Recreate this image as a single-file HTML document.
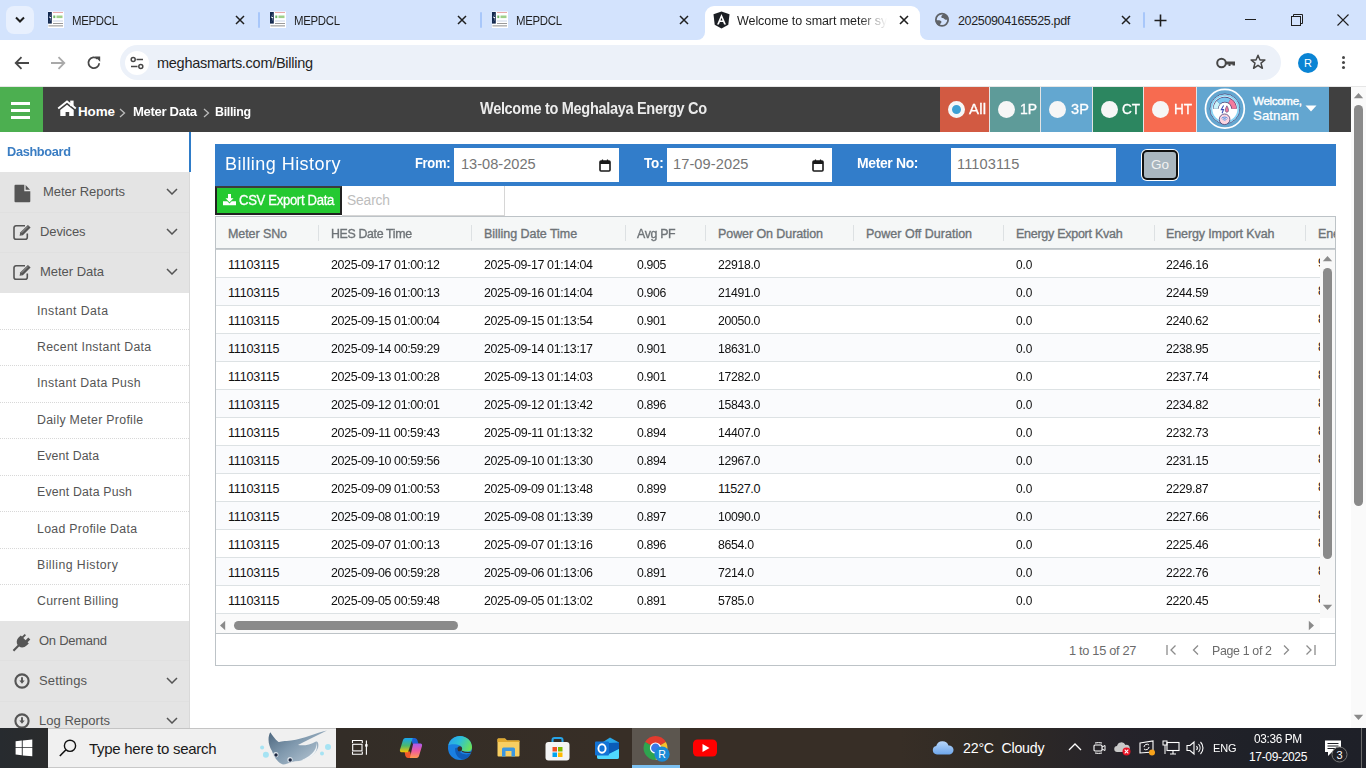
<!DOCTYPE html>
<html><head><meta charset="utf-8">
<style>
*{box-sizing:border-box;margin:0;padding:0}
html,body{width:1366px;height:768px;overflow:hidden;background:#fff;font-family:"Liberation Sans",sans-serif}
.a{position:absolute}
.nw{white-space:nowrap}
</style></head><body>

<div class="a" style="left:0;top:0;width:1366px;height:40px;background:#d3e3fd"></div>
<div class="a" style="left:6px;top:6px;width:28px;height:28px;border-radius:8px;background:#e8f0fe"></div>
<svg class="a" style="left:14px;top:15px" width="12" height="10" viewBox="0 0 12 10"><path d="M2 2.5 L6 6.5 L10 2.5" fill="none" stroke="#1f1f1f" stroke-width="2"/></svg>
<svg class="a" style="left:48px;top:11px" width="16" height="17" viewBox="0 0 16 17">
 <rect x="0" y="0.5" width="16" height="16.5" fill="#fff"/>
 <rect x="0" y="1" width="3.8" height="11.6" fill="#13294f"/>
 <path d="M2.6 2L1.3 7H2.5L1.6 11.5L3.2 6H2Z" fill="#fff"/>
 <rect x="5" y="1" width="10" height="1" fill="#eaa9a9"/>
 <rect x="5.3" y="4.5" width="2" height="2.6" fill="#74b86a"/>
 <rect x="8.5" y="4.5" width="6" height="2.6" fill="#9fd08a"/>
 <rect x="5" y="9.2" width="10" height="1.6" fill="#dfe5f1"/>
 <rect x="5" y="12" width="10" height="1" fill="#9a9a9a"/>
 <rect x="0.5" y="14" width="14.5" height="1.6" fill="#b8b8b8"/>
</svg>
<div class="a nw " style="left:72px;top:14px;font-size:12.5px;color:#1f1f1f;letter-spacing:-0.35px;transform:scaleX(0.914);transform-origin:0 0;">MEPDCL</div>
<svg class="a" style="left:235px;top:15px" width="10" height="10" viewBox="0 0 10 10"><path d="M1 1L9 9M9 1L1 9" stroke="#1f1f1f" stroke-width="1.5"/></svg>
<div class="a" style="left:258px;top:12px;width:2px;height:16px;background:#a8c7fa;border-radius:1px"></div>
<svg class="a" style="left:270px;top:11px" width="16" height="17" viewBox="0 0 16 17">
 <rect x="0" y="0.5" width="16" height="16.5" fill="#fff"/>
 <rect x="0" y="1" width="3.8" height="11.6" fill="#13294f"/>
 <path d="M2.6 2L1.3 7H2.5L1.6 11.5L3.2 6H2Z" fill="#fff"/>
 <rect x="5" y="1" width="10" height="1" fill="#eaa9a9"/>
 <rect x="5.3" y="4.5" width="2" height="2.6" fill="#74b86a"/>
 <rect x="8.5" y="4.5" width="6" height="2.6" fill="#9fd08a"/>
 <rect x="5" y="9.2" width="10" height="1.6" fill="#dfe5f1"/>
 <rect x="5" y="12" width="10" height="1" fill="#9a9a9a"/>
 <rect x="0.5" y="14" width="14.5" height="1.6" fill="#b8b8b8"/>
</svg>
<div class="a nw " style="left:294px;top:14px;font-size:12.5px;color:#1f1f1f;letter-spacing:-0.35px;transform:scaleX(0.914);transform-origin:0 0;">MEPDCL</div>
<svg class="a" style="left:457px;top:15px" width="10" height="10" viewBox="0 0 10 10"><path d="M1 1L9 9M9 1L1 9" stroke="#1f1f1f" stroke-width="1.5"/></svg>
<div class="a" style="left:480px;top:12px;width:2px;height:16px;background:#a8c7fa;border-radius:1px"></div>
<svg class="a" style="left:492px;top:11px" width="16" height="17" viewBox="0 0 16 17">
 <rect x="0" y="0.5" width="16" height="16.5" fill="#fff"/>
 <rect x="0" y="1" width="3.8" height="11.6" fill="#13294f"/>
 <path d="M2.6 2L1.3 7H2.5L1.6 11.5L3.2 6H2Z" fill="#fff"/>
 <rect x="5" y="1" width="10" height="1" fill="#eaa9a9"/>
 <rect x="5.3" y="4.5" width="2" height="2.6" fill="#74b86a"/>
 <rect x="8.5" y="4.5" width="6" height="2.6" fill="#9fd08a"/>
 <rect x="5" y="9.2" width="10" height="1.6" fill="#dfe5f1"/>
 <rect x="5" y="12" width="10" height="1" fill="#9a9a9a"/>
 <rect x="0.5" y="14" width="14.5" height="1.6" fill="#b8b8b8"/>
</svg>
<div class="a nw " style="left:516px;top:14px;font-size:12.5px;color:#1f1f1f;letter-spacing:-0.35px;transform:scaleX(0.914);transform-origin:0 0;">MEPDCL</div>
<svg class="a" style="left:679px;top:15px" width="10" height="10" viewBox="0 0 10 10"><path d="M1 1L9 9M9 1L1 9" stroke="#1f1f1f" stroke-width="1.5"/></svg>

<div class="a" style="left:705px;top:6px;width:215px;height:40px;background:#fff;border-radius:9px 9px 0 0"></div>
<div class="a" style="left:697px;top:30px;width:8px;height:10px;background:#fff"></div>
<div class="a" style="left:689px;top:22px;width:16px;height:18px;background:#d3e3fd;border-radius:0 0 8px 0"></div>
<div class="a" style="left:920px;top:30px;width:8px;height:10px;background:#fff"></div>
<div class="a" style="left:920px;top:22px;width:16px;height:18px;background:#d3e3fd;border-radius:0 0 0 8px"></div>
<svg class="a" style="left:713px;top:11px" width="17" height="18" viewBox="0 0 17 18"><path d="M8.5 0.5 L16.5 3.3 L15.3 13.8 L8.5 17.5 L1.7 13.8 L0.5 3.3Z" fill="#1c1f24"/><path d="M8.5 3 L4 13.5 H5.9 L6.9 11 H10.1 L11.1 13.5 H13 Z M7.5 9.4 L8.5 6.8 L9.5 9.4Z" fill="#fff"/></svg>
<div class="a nw " style="left:737px;top:14px;font-size:12.5px;color:#1f1f1f;letter-spacing:-0.07px;width:152px;overflow:hidden;-webkit-mask-image:linear-gradient(90deg,#000 122px,transparent 150px);">Welcome to smart meter system</div>
<svg class="a" style="left:899px;top:15px" width="10" height="10" viewBox="0 0 10 10"><path d="M1 1L9 9M9 1L1 9" stroke="#1f1f1f" stroke-width="1.6"/></svg>
<svg class="a" style="left:934px;top:12px" width="16" height="16" viewBox="0 0 16 16"><circle cx="8" cy="7.8" r="6.1" fill="none" stroke="#5f6368" stroke-width="1.8"/><path d="M7.3 5C7.3 3.5 8.5 2.6 10 2.3L13.5 3.8L14.5 6.5C13.5 7.8 12 8 11 7.5C10 7 9.8 6 8.8 6C8 6 7.3 5.8 7.3 5Z" fill="#5f6368"/><path d="M1.5 8.5C3 8.2 5 8 6.5 8.8C7.8 9.5 7.8 10.5 6.8 11.2C6 11.8 6 12.8 6.3 14L3.5 13L1.8 10.5Z" fill="#5f6368"/></svg>
<div class="a nw " style="left:958px;top:14px;font-size:12.5px;color:#1f1f1f;letter-spacing:-0.35px;">20250904165525.pdf</div>
<svg class="a" style="left:1121px;top:15px" width="10" height="10" viewBox="0 0 10 10"><path d="M1 1L9 9M9 1L1 9" stroke="#1f1f1f" stroke-width="1.5"/></svg>
<div class="a" style="left:1143px;top:12px;width:2px;height:16px;background:#a8c7fa;border-radius:1px"></div>
<svg class="a" style="left:1154px;top:14px" width="13" height="13" viewBox="0 0 13 13"><path d="M6.5 0.5V12.5M0.5 6.5H12.5" stroke="#1f1f1f" stroke-width="1.6"/></svg>
<div class="a" style="left:1245px;top:19px;width:11px;height:1px;background:#1f1f1f"></div>
<svg class="a" style="left:1291px;top:14px" width="12" height="12" viewBox="0 0 12 12"><rect x="0.5" y="2.5" width="9" height="9" fill="none" stroke="#1f1f1f"/><path d="M2.5 2.5V0.5H11.5V9.5H9.5" fill="none" stroke="#1f1f1f"/></svg>
<svg class="a" style="left:1337px;top:14px" width="12" height="12" viewBox="0 0 12 12"><path d="M0.5 0.5L11.5 11.5M11.5 0.5L0.5 11.5" stroke="#1f1f1f" stroke-width="1.1"/></svg>

<div class="a" style="left:0;top:40px;width:1366px;height:47px;background:#fff;border-radius:8px 8px 0 0"></div>
<svg class="a" style="left:14px;top:56px" width="16" height="14" viewBox="0 0 16 14"><path d="M15 7H2M7.5 1.2L1.7 7L7.5 12.8" fill="none" stroke="#474747" stroke-width="1.8"/></svg>
<svg class="a" style="left:50px;top:56px" width="16" height="14" viewBox="0 0 16 14"><path d="M1 7H14M8.5 1.2L14.3 7L8.5 12.8" fill="none" stroke="#a9a9a9" stroke-width="1.8"/></svg>
<svg class="a" style="left:86px;top:55px" width="16" height="16" viewBox="0 0 16 16"><path d="M13.2 8.2A5.4 5.4 0 1 1 11.6 3.9" fill="none" stroke="#474747" stroke-width="1.8"/><path d="M9 1.6H14.2V6.8Z" fill="#474747"/></svg>
<div class="a" style="left:120px;top:45px;width:1161px;height:35px;background:#ecf1f9;border-radius:18px"></div>
<div class="a" style="left:125px;top:51px;width:24px;height:24px;border-radius:50%;background:#fff"></div>
<svg class="a" style="left:130px;top:56px" width="14" height="14" viewBox="0 0 14 14"><circle cx="3.2" cy="3.5" r="2" fill="none" stroke="#474747" stroke-width="1.5"/><path d="M6.5 3.5H13" stroke="#474747" stroke-width="1.5"/><circle cx="10.8" cy="10.5" r="2" fill="none" stroke="#474747" stroke-width="1.5"/><path d="M1 10.5H7.5" stroke="#474747" stroke-width="1.5"/></svg>
<div class="a nw " style="left:157px;top:55px;font-size:14.5px;color:#1f1f1f;letter-spacing:-0.27px;">meghasmarts.com/Billing</div>
<svg class="a" style="left:1216px;top:56px" width="20" height="14" viewBox="0 0 20 14"><circle cx="5.5" cy="7" r="4.3" fill="none" stroke="#474747" stroke-width="2"/><path d="M9.5 5.5H19V9.5H16.5V8.5H14.5V10H12.5V8.5H9.5Z" fill="#474747"/></svg>
<svg class="a" style="left:1250px;top:54px" width="16" height="16" viewBox="0 0 16 16"><path d="M8 1.3L10 6H14.9L11 9.1L12.4 14.3L8 11.3L3.6 14.3L5 9.1L1.1 6H6Z" fill="none" stroke="#474747" stroke-width="1.5" stroke-linejoin="round"/></svg>
<div class="a" style="left:1298px;top:53px;width:20px;height:20px;border-radius:50%;background:#0a84d4;color:#fff;font-size:11px;text-align:center;line-height:20px">R</div>
<div class="a" style="left:1342px;top:56px;width:3px;height:3px;border-radius:50%;background:#474747;box-shadow:0 5px 0 #474747,0 10px 0 #474747"></div>
<div class="a" style="left:0;top:86px;width:1366px;height:1px;background:#e6e6e6"></div>

<div class="a" style="left:0;top:87px;width:1351px;height:45px;background:#404040"></div>
<div class="a" style="left:0;top:87px;width:43px;height:45px;background:#4caf50"></div>
<div class="a" style="left:11px;top:102px;width:19px;height:3px;background:#fff;box-shadow:0 7px 0 #fff,0 14px 0 #fff"></div>
<svg class="a" style="left:57px;top:100px" width="20" height="17" viewBox="0 0 20 17"><path d="M1.2 8.4L10 1.4L18.8 8.4" fill="none" stroke="#fff" stroke-width="1.9"/><rect x="13.2" y="0.6" width="3.4" height="5.5" fill="#fff"/><path d="M3.3 10L10 4.7L16.7 10V16H12.2V12H8.6V16H3.3Z" fill="#fff"/></svg>
<svg class="a" style="left:119px;top:107.5px" width="7" height="10" viewBox="0 0 7 10"><path d="M1 1L5.5 5L1 9" fill="none" stroke="#bbb" stroke-width="1.3"/></svg>
<svg class="a" style="left:203px;top:107.5px" width="7" height="10" viewBox="0 0 7 10"><path d="M1 1L5.5 5L1 9" fill="none" stroke="#bbb" stroke-width="1.3"/></svg>
<div class="a nw " style="left:78px;top:104px;font-size:13.4px;font-weight:bold;color:#fff;letter-spacing:-0.07px;">Home</div>
<div class="a nw " style="left:133px;top:104px;font-size:13.4px;font-weight:bold;color:#fff;letter-spacing:-0.35px;transform:scaleX(0.980);transform-origin:0 0;">Meter Data</div>
<div class="a nw " style="left:215px;top:104px;font-size:13.4px;font-weight:bold;color:#fff;letter-spacing:-0.35px;transform:scaleX(0.927);transform-origin:0 0;">Billing</div>
<div class="a nw " style="left:480px;top:100px;font-size:16px;font-weight:bold;color:#ececec;letter-spacing:-0.35px;transform:scaleX(0.908);transform-origin:0 0;">Welcome to Meghalaya Energy Co</div>
<div class="a" style="left:940px;top:87px;width:49px;height:45px;background:#d25a42"></div>
<div class="a" style="left:989px;top:87px;width:1px;height:45px;background:#e4e4e4"></div>
<div class="a" style="left:948px;top:101px;width:17px;height:17px;border-radius:50%;background:#3da0d4;border:4px solid #f6f6f6"></div>
<div class="a nw " style="left:969px;top:101px;font-size:14.3px;color:#fff;letter-spacing:0.20px;transform:scaleX(1.044);transform-origin:0 0;-webkit-text-stroke:0.3px #fff;">All</div>
<div class="a" style="left:990px;top:87px;width:50px;height:45px;background:#5e9b99"></div>
<div class="a" style="left:1040px;top:87px;width:1px;height:45px;background:#e4e4e4"></div>
<div class="a" style="left:998px;top:101px;width:17px;height:17px;border-radius:50%;background:#f6f6f6"></div>
<div class="a nw " style="left:1020px;top:101px;font-size:14.3px;color:#fff;letter-spacing:-0.10px;transform:scaleX(0.977);transform-origin:0 0;-webkit-text-stroke:0.3px #fff;">1P</div>
<div class="a" style="left:1041px;top:87px;width:51px;height:45px;background:#63a7d0"></div>
<div class="a" style="left:1092px;top:87px;width:1px;height:45px;background:#e4e4e4"></div>
<div class="a" style="left:1049px;top:101px;width:17px;height:17px;border-radius:50%;background:#f6f6f6"></div>
<div class="a nw " style="left:1071px;top:101px;font-size:14.3px;color:#fff;letter-spacing:0.20px;transform:scaleX(1.017);transform-origin:0 0;-webkit-text-stroke:0.3px #fff;">3P</div>
<div class="a" style="left:1093px;top:87px;width:50px;height:45px;background:#2c8660"></div>
<div class="a" style="left:1143px;top:87px;width:1px;height:45px;background:#e4e4e4"></div>
<div class="a" style="left:1101px;top:101px;width:17px;height:17px;border-radius:50%;background:#f6f6f6"></div>
<div class="a nw " style="left:1122px;top:101px;font-size:14.3px;color:#fff;letter-spacing:-0.10px;transform:scaleX(0.949);transform-origin:0 0;-webkit-text-stroke:0.3px #fff;">CT</div>
<div class="a" style="left:1144px;top:87px;width:52px;height:45px;background:#f76b50"></div>
<div class="a" style="left:1196px;top:87px;width:1px;height:45px;background:#e4e4e4"></div>
<div class="a" style="left:1152px;top:101px;width:17px;height:17px;border-radius:50%;background:#f6f6f6"></div>
<div class="a nw " style="left:1174px;top:101px;font-size:14.3px;color:#fff;letter-spacing:-0.10px;transform:scaleX(0.949);transform-origin:0 0;-webkit-text-stroke:0.3px #fff;">HT</div>
<div class="a" style="left:1197px;top:87px;width:132px;height:45px;background:#63a6d0"></div>
<svg class="a" style="left:1204px;top:88px" width="42" height="42" viewBox="0 0 42 42">
 <circle cx="20.9" cy="20.8" r="19.4" fill="none" stroke="#fff" stroke-width="1.7"/>
 <circle cx="20.9" cy="20.8" r="14.8" fill="#fff" stroke="#4b3f72" stroke-width="0.9"/>
 <circle cx="20.9" cy="20.8" r="13.5" fill="none" stroke="#86d3f4" stroke-width="1.8"/>
 <path d="M11.75 20.8 A9.15 9.15 0 0 1 30.05 20.8" fill="none" stroke="#4b3f72" stroke-width="5.6"/>
 <path d="M11.75 20.80 A9.15 9.15 0 0 1 14.43 14.33" fill="none" stroke="#c9f3fb" stroke-width="4.4"/>
 <path d="M14.43 14.33 A9.15 9.15 0 0 1 25.48 12.88" fill="none" stroke="#7cc7f0" stroke-width="4.4"/>
 <path d="M25.48 12.88 A9.15 9.15 0 0 1 30.05 20.80" fill="none" stroke="#f47a9d" stroke-width="4.4"/>
 <path d="M19.6 17.6L17.3 21.6H19.5L18.1 25.3" fill="none" stroke="#3a4fb8" stroke-width="1.1"/>
 <path d="M22.9 17.8C21.6 20 21 21.8 21.5 23.3C22 24.6 23.8 24.6 24.3 23.3C24.8 21.8 24.2 20 22.9 17.8Z" fill="#f47a9d" stroke="#4b3f72" stroke-width="0.6"/>
 <circle cx="20.6" cy="31.3" r="5.3" fill="#fbd5e1" stroke="#4b3f72" stroke-width="0.8"/>
 <path d="M17.6 30.3A4.2 4.2 0 0 1 23.6 30.3M18.7 31.5A2.6 2.6 0 0 1 22.5 31.5M19.8 32.6A1 1 0 0 1 21.4 32.6" fill="none" stroke="#3b8ee8" stroke-width="0.9"/>
</svg>
<svg class="a" style="left:1305px;top:105px" width="12" height="7" viewBox="0 0 12 7"><path d="M0.5 0.5H11.5L6 6.5Z" fill="#fff"/></svg>
<div class="a nw " style="left:1253px;top:94px;font-size:11.6px;color:#fff;letter-spacing:-0.33px;-webkit-text-stroke:0.4px #fff;">Welcome,</div>
<div class="a nw " style="left:1253px;top:108px;font-size:13.2px;color:#fff;letter-spacing:0.11px;-webkit-text-stroke:0.25px #fff;">Satnam</div>
<div class="a" style="left:1351px;top:87px;width:15px;height:641px;background:#fafafa"></div>
<svg class="a" style="left:1353px;top:92px" width="11" height="7" viewBox="0 0 11 7"><path d="M0.8 6.2H10.2L5.5 1Z" fill="#8a8a8a"/></svg>
<div class="a" style="left:1354px;top:105px;width:9px;height:401px;border-radius:5px;background:#8a8a8a"></div>
<svg class="a" style="left:1353px;top:714px" width="11" height="7" viewBox="0 0 11 7"><path d="M0.8 0.8H10.2L5.5 6Z" fill="#8a8a8a"/></svg>
<div class="a" style="left:0;top:132px;width:190px;height:596px;background:#fff;border-right:1px solid #d9d9d9"></div>
<div class="a" style="left:189px;top:132px;width:2px;height:40px;background:#2f7cc8"></div>
<div class="a" style="left:0;top:172px;width:189px;height:121px;background:#e4e4e4"></div>
<div class="a" style="left:0;top:212px;width:189px;height:1px;background:#e0e0e0"></div>
<div class="a" style="left:0;top:252px;width:189px;height:1px;background:#e0e0e0"></div>
<div class="a" style="left:0;top:621px;width:189px;height:107px;background:#e4e4e4"></div>
<div class="a" style="left:0;top:660px;width:189px;height:1px;background:#e0e0e0"></div>
<div class="a" style="left:0;top:701px;width:189px;height:1px;background:#e0e0e0"></div>
<div class="a nw " style="left:7px;top:144px;font-size:13.2px;font-weight:bold;color:#3a7dc3;letter-spacing:-0.35px;transform:scaleX(0.968);transform-origin:0 0;">Dashboard</div>
<svg class="a" style="left:14px;top:184px" width="17" height="19" viewBox="0 0 17 19"><path d="M1.5 0.7H10.3V7.2H16.3V17.3A1 1 0 0 1 15.3 18.3H1.5A1 1 0 0 1 0.5 17.3V1.7A1 1 0 0 1 1.5 0.7Z" fill="#555"/><path d="M11.6 1L16 5.8H11.6Z" fill="#555"/></svg>
<div class="a nw " style="left:43px;top:184px;font-size:13px;color:#555;letter-spacing:-0.03px;">Meter Reports</div>
<svg class="a" style="left:13px;top:224px" width="19" height="17" viewBox="0 0 19 17"><path d="M12 1.8H3A2 2 0 0 0 1 3.8V13.3A2 2 0 0 0 3 15.3H12.3A2 2 0 0 0 14.3 13.3V9.5" fill="none" stroke="#555" stroke-width="1.6"/><path d="M6.6 11.8L7.2 8.6L14.9 0.9L17.6 3.6L9.9 11.3Z" fill="#555"/><path d="M8.6 8.8L14.9 2.5M7.9 10.5L8.5 11" stroke="#bbb" stroke-width="0.7"/></svg>
<div class="a nw " style="left:40px;top:224px;font-size:13px;color:#555;letter-spacing:-0.12px;">Devices</div>
<svg class="a" style="left:13px;top:264px" width="19" height="17" viewBox="0 0 19 17"><path d="M12 1.8H3A2 2 0 0 0 1 3.8V13.3A2 2 0 0 0 3 15.3H12.3A2 2 0 0 0 14.3 13.3V9.5" fill="none" stroke="#555" stroke-width="1.6"/><path d="M6.6 11.8L7.2 8.6L14.9 0.9L17.6 3.6L9.9 11.3Z" fill="#555"/><path d="M8.6 8.8L14.9 2.5M7.9 10.5L8.5 11" stroke="#bbb" stroke-width="0.7"/></svg>
<div class="a nw " style="left:40px;top:264px;font-size:13px;color:#555;letter-spacing:-0.03px;">Meter Data</div>
<svg class="a" style="left:166px;top:188px" width="12" height="7" viewBox="0 0 12 7"><path d="M1 1L6 6L11 1" fill="none" stroke="#555" stroke-width="1.5"/></svg>
<svg class="a" style="left:166px;top:228px" width="12" height="7" viewBox="0 0 12 7"><path d="M1 1L6 6L11 1" fill="none" stroke="#555" stroke-width="1.5"/></svg>
<svg class="a" style="left:166px;top:268px" width="12" height="7" viewBox="0 0 12 7"><path d="M1 1L6 6L11 1" fill="none" stroke="#555" stroke-width="1.5"/></svg>
<svg class="a" style="left:166px;top:677px" width="12" height="7" viewBox="0 0 12 7"><path d="M1 1L6 6L11 1" fill="none" stroke="#555" stroke-width="1.5"/></svg>
<svg class="a" style="left:166px;top:717px" width="12" height="7" viewBox="0 0 12 7"><path d="M1 1L6 6L11 1" fill="none" stroke="#555" stroke-width="1.5"/></svg>
<div class="a nw " style="left:37px;top:304px;font-size:12.3px;color:#555;letter-spacing:0.43px;">Instant Data</div>
<div class="a nw " style="left:37px;top:340px;font-size:12.3px;color:#555;letter-spacing:0.30px;">Recent Instant Data</div>
<div class="a nw " style="left:37px;top:376px;font-size:12.3px;color:#555;letter-spacing:0.36px;">Instant Data Push</div>
<div class="a nw " style="left:37px;top:413px;font-size:12.3px;color:#555;letter-spacing:0.31px;">Daily Meter Profile</div>
<div class="a nw " style="left:37px;top:449px;font-size:12.3px;color:#555;letter-spacing:0.13px;">Event Data</div>
<div class="a nw " style="left:37px;top:485px;font-size:12.3px;color:#555;letter-spacing:0.19px;">Event Data Push</div>
<div class="a nw " style="left:37px;top:522px;font-size:12.3px;color:#555;letter-spacing:0.31px;">Load Profile Data</div>
<div class="a nw " style="left:37px;top:558px;font-size:12.3px;color:#555;letter-spacing:0.45px;">Billing History</div>
<div class="a nw " style="left:37px;top:594px;font-size:12.3px;color:#555;letter-spacing:0.30px;">Current Billing</div>
<div class="a" style="left:0;top:329px;width:189px;height:0;border-top:1px dotted #d8d8d8"></div>
<div class="a" style="left:0;top:365px;width:189px;height:0;border-top:1px dotted #d8d8d8"></div>
<div class="a" style="left:0;top:402px;width:189px;height:0;border-top:1px dotted #d8d8d8"></div>
<div class="a" style="left:0;top:438px;width:189px;height:0;border-top:1px dotted #d8d8d8"></div>
<div class="a" style="left:0;top:475px;width:189px;height:0;border-top:1px dotted #d8d8d8"></div>
<div class="a" style="left:0;top:511px;width:189px;height:0;border-top:1px dotted #d8d8d8"></div>
<div class="a" style="left:0;top:548px;width:189px;height:0;border-top:1px dotted #d8d8d8"></div>
<div class="a" style="left:0;top:584px;width:189px;height:0;border-top:1px dotted #d8d8d8"></div>
<svg class="a" style="left:12px;top:632px" width="20" height="20" viewBox="0 0 20 20"><path d="M12 1.2L14 3.2L11.3 5.9L13.6 8.2L16.3 5.5L18.3 7.5L15.6 10.2L16.8 11.4L14.6 13.6C12.4 15.8 9.2 16 7.1 14.6L2.2 19.5L0.7 18L5.6 13.1C4.2 11 4.4 7.8 6.6 5.6L8.8 3.4L10 4.6L12.7 1.9Z" fill="#555"/></svg>
<div class="a nw " style="left:39px;top:633px;font-size:13px;color:#555;letter-spacing:-0.26px;">On Demand</div>
<svg class="a" style="left:14px;top:673px" width="16" height="16" viewBox="0 0 16 16"><circle cx="8" cy="8" r="6.6" fill="none" stroke="#555" stroke-width="2.1"/><path d="M8 4.3V8.5" stroke="#555" stroke-width="1.9"/><path d="M5.3 7.6L8 10.8L10.7 7.6Z" fill="#555"/></svg>
<div class="a nw " style="left:39px;top:673px;font-size:13px;color:#555;letter-spacing:0.15px;">Settings</div>
<svg class="a" style="left:14px;top:713px" width="16" height="16" viewBox="0 0 16 16"><circle cx="8" cy="8" r="6.6" fill="none" stroke="#555" stroke-width="2.1"/><path d="M8 4.3V8.5" stroke="#555" stroke-width="1.9"/><path d="M5.3 7.6L8 10.8L10.7 7.6Z" fill="#555"/></svg>
<div class="a nw " style="left:39px;top:713px;font-size:13px;color:#555;letter-spacing:0.02px;">Log Reports</div>
<div class="a" style="left:215px;top:144px;width:1121px;height:42px;background:#327dca"></div>
<div class="a" style="left:454px;top:148px;width:165px;height:34px;background:#fff"></div>
<div class="a" style="left:667px;top:148px;width:165px;height:34px;background:#fff"></div>
<div class="a" style="left:951px;top:148px;width:165px;height:34px;background:#fff"></div>
<svg class="a" style="left:599px;top:159px" width="12" height="13" viewBox="0 0 12 13"><rect x="1" y="2" width="10" height="10" rx="1" fill="none" stroke="#1a1a1a" stroke-width="1.6"/><rect x="1" y="2" width="10" height="3" fill="#1a1a1a"/><path d="M3.5 0.5V2.5M8.5 0.5V2.5" stroke="#1a1a1a" stroke-width="1.2"/></svg>
<svg class="a" style="left:812px;top:159px" width="12" height="13" viewBox="0 0 12 13"><rect x="1" y="2" width="10" height="10" rx="1" fill="none" stroke="#1a1a1a" stroke-width="1.6"/><rect x="1" y="2" width="10" height="3" fill="#1a1a1a"/><path d="M3.5 0.5V2.5M8.5 0.5V2.5" stroke="#1a1a1a" stroke-width="1.2"/></svg>
<div class="a nw " style="left:224.5px;top:154px;font-size:17.6px;color:#fff;letter-spacing:0.45px;transform:scaleX(1.023);transform-origin:0 0;">Billing History</div>
<div class="a nw " style="left:415px;top:155px;font-size:14.5px;font-weight:bold;color:#fff;letter-spacing:-0.35px;transform:scaleX(0.894);transform-origin:0 0;">From:</div>
<div class="a nw " style="left:644px;top:155px;font-size:14.5px;font-weight:bold;color:#fff;letter-spacing:-0.10px;transform:scaleX(0.926);transform-origin:0 0;">To:</div>
<div class="a nw " style="left:857px;top:155px;font-size:14.5px;font-weight:bold;color:#fff;letter-spacing:-0.35px;transform:scaleX(0.960);transform-origin:0 0;">Meter No:</div>
<div class="a nw " style="left:461px;top:156px;font-size:14.6px;color:#757575;">13-08-2025</div>
<div class="a nw " style="left:673px;top:156px;font-size:14.6px;color:#757575;letter-spacing:0.09px;">17-09-2025</div>
<div class="a nw " style="left:957px;top:156px;font-size:14.6px;color:#757575;letter-spacing:0.10px;">11103115</div>
<div class="a" style="left:1141px;top:149px;width:38px;height:32px;border-radius:6px;background:#fff"></div>
<div class="a" style="left:1142px;top:150px;width:36px;height:30px;border-radius:5px;background:#a9b6bf;border:2px solid #111"></div>
<div class="a nw " style="left:1151px;top:156.5px;font-size:13.5px;color:#f2f2f2;letter-spacing:0px;">Go</div>
<div class="a" style="left:215px;top:186px;width:127px;height:29px;background:#24c931;border:2px solid #222;border-top-color:#3c3c3c"></div>
<svg class="a" style="left:222.5px;top:193.5px" width="13" height="12" viewBox="0 0 13 12"><path d="M5 0H8V4.3H10.5L6.5 8.3L2.5 4.3H5Z" fill="#fff"/><path d="M0 7.3H4.3L6.5 9.5L8.7 7.3H13V11.3H0Z" fill="#fff"/></svg>
<div class="a" style="left:342px;top:186px;width:163px;height:30px;background:#fff;border-right:1px solid #d6d6d6;border-bottom:1px solid #d6d6d6"></div>
<div class="a nw " style="left:239px;top:193px;font-size:13.8px;color:#fff;letter-spacing:-0.35px;transform:scaleX(0.951);transform-origin:0 0;-webkit-text-stroke:0.3px #fff;">CSV Export Data</div>
<div class="a nw " style="left:347px;top:193px;font-size:13.8px;color:#bdbdbd;letter-spacing:-0.14px;">Search</div>
<div class="a" style="left:215px;top:216px;width:1121px;height:450px;border:1px solid #bdc3c7;background:#fff"></div>
<div class="a" style="left:216px;top:217px;width:1119px;height:32px;background:#f5f7f7;border-bottom:1px solid #bdc3c7"></div>
<div class="a" style="left:216px;top:249px;width:1119px;height:1px;background:#c8cdd0"></div>
<div class="a" style="left:318px;top:225px;width:1px;height:16px;background:#dde1e3"></div>
<div class="a" style="left:471px;top:225px;width:1px;height:16px;background:#dde1e3"></div>
<div class="a" style="left:625px;top:225px;width:1px;height:16px;background:#dde1e3"></div>
<div class="a" style="left:705px;top:225px;width:1px;height:16px;background:#dde1e3"></div>
<div class="a" style="left:853px;top:225px;width:1px;height:16px;background:#dde1e3"></div>
<div class="a" style="left:1003px;top:225px;width:1px;height:16px;background:#dde1e3"></div>
<div class="a" style="left:1154px;top:225px;width:1px;height:16px;background:#dde1e3"></div>
<div class="a" style="left:1305px;top:225px;width:1px;height:16px;background:#dde1e3"></div>
<div class="a nw " style="left:228px;top:227px;font-size:12.5px;color:#6e7377;letter-spacing:-0.09px;-webkit-text-stroke:0.35px #6e7377;">Meter SNo</div>
<div class="a nw " style="left:331px;top:227px;font-size:12.5px;color:#6e7377;letter-spacing:-0.35px;transform:scaleX(0.989);transform-origin:0 0;-webkit-text-stroke:0.35px #6e7377;">HES Date Time</div>
<div class="a nw " style="left:484px;top:227px;font-size:12.5px;color:#6e7377;letter-spacing:-0.04px;-webkit-text-stroke:0.35px #6e7377;">Billing Date Time</div>
<div class="a nw " style="left:637px;top:227px;font-size:12.5px;color:#6e7377;letter-spacing:-0.35px;transform:scaleX(0.989);transform-origin:0 0;-webkit-text-stroke:0.35px #6e7377;">Avg PF</div>
<div class="a nw " style="left:718px;top:227px;font-size:12.5px;color:#6e7377;letter-spacing:-0.08px;-webkit-text-stroke:0.35px #6e7377;">Power On Duration</div>
<div class="a nw " style="left:866px;top:227px;font-size:12.5px;color:#6e7377;-webkit-text-stroke:0.35px #6e7377;">Power Off Duration</div>
<div class="a nw " style="left:1016px;top:227px;font-size:12.5px;color:#6e7377;letter-spacing:-0.27px;-webkit-text-stroke:0.35px #6e7377;">Energy Export Kvah</div>
<div class="a nw " style="left:1166px;top:227px;font-size:12.5px;color:#6e7377;letter-spacing:-0.12px;-webkit-text-stroke:0.35px #6e7377;">Energy Import Kvah</div>
<div class="a nw" style="left:1305px;top:217px;width:30px;height:32px;overflow:hidden"><div class="a nw " style="left:13px;top:10px;font-size:12.5px;color:#6e7377;letter-spacing:-0.2px;-webkit-text-stroke:0.35px #6e7377;">Energy</div>
</div>
<div class="a" style="left:216px;top:250px;width:1104px;height:28px;background:#fff;border-bottom:1px solid #dde2e4"></div>
<div class="a nw " style="left:228px;top:258px;font-size:12.6px;color:#111;letter-spacing:-0.23px;">11103115</div>
<div class="a nw " style="left:331px;top:258px;font-size:12.6px;color:#111;letter-spacing:-0.35px;transform:scaleX(0.985);transform-origin:0 0;">2025-09-17 01:00:12</div>
<div class="a nw " style="left:484px;top:258px;font-size:12.6px;color:#111;letter-spacing:-0.35px;transform:scaleX(0.985);transform-origin:0 0;">2025-09-17 01:14:04</div>
<div class="a nw " style="left:637px;top:258px;font-size:12.6px;color:#111;letter-spacing:-0.35px;transform:scaleX(0.973);transform-origin:0 0;">0.905</div>
<div class="a nw " style="left:718px;top:258px;font-size:12.6px;color:#111;letter-spacing:-0.35px;transform:scaleX(0.974);transform-origin:0 0;">22918.0</div>
<div class="a nw " style="left:1016px;top:258px;font-size:12.6px;color:#111;letter-spacing:-0.10px;transform:scaleX(0.941);transform-origin:0 0;">0.0</div>
<div class="a nw " style="left:1166px;top:258px;font-size:12.6px;color:#111;letter-spacing:-0.35px;transform:scaleX(0.979);transform-origin:0 0;">2246.16</div>
<div class="a" style="left:1318px;top:249px;width:2px;height:28px;overflow:hidden"><div class="a nw" style="left:0;top:7px;font-size:12.6px;color:#111">9</div></div>
<div class="a" style="left:216px;top:278px;width:1104px;height:28px;background:#fafbfd;border-bottom:1px solid #dde2e4"></div>
<div class="a nw " style="left:228px;top:286px;font-size:12.6px;color:#111;letter-spacing:-0.23px;">11103115</div>
<div class="a nw " style="left:331px;top:286px;font-size:12.6px;color:#111;letter-spacing:-0.35px;transform:scaleX(0.985);transform-origin:0 0;">2025-09-16 01:00:13</div>
<div class="a nw " style="left:484px;top:286px;font-size:12.6px;color:#111;letter-spacing:-0.35px;transform:scaleX(0.985);transform-origin:0 0;">2025-09-16 01:14:04</div>
<div class="a nw " style="left:637px;top:286px;font-size:12.6px;color:#111;letter-spacing:-0.35px;transform:scaleX(0.973);transform-origin:0 0;">0.906</div>
<div class="a nw " style="left:718px;top:286px;font-size:12.6px;color:#111;letter-spacing:-0.35px;transform:scaleX(0.974);transform-origin:0 0;">21491.0</div>
<div class="a nw " style="left:1016px;top:286px;font-size:12.6px;color:#111;letter-spacing:-0.10px;transform:scaleX(0.941);transform-origin:0 0;">0.0</div>
<div class="a nw " style="left:1166px;top:286px;font-size:12.6px;color:#111;letter-spacing:-0.35px;transform:scaleX(0.979);transform-origin:0 0;">2244.59</div>
<div class="a" style="left:1318px;top:277px;width:2px;height:28px;overflow:hidden"><div class="a nw" style="left:0;top:7px;font-size:12.6px;color:#111">8</div></div>
<div class="a" style="left:216px;top:306px;width:1104px;height:28px;background:#fff;border-bottom:1px solid #dde2e4"></div>
<div class="a nw " style="left:228px;top:314px;font-size:12.6px;color:#111;letter-spacing:-0.23px;">11103115</div>
<div class="a nw " style="left:331px;top:314px;font-size:12.6px;color:#111;letter-spacing:-0.35px;transform:scaleX(0.985);transform-origin:0 0;">2025-09-15 01:00:04</div>
<div class="a nw " style="left:484px;top:314px;font-size:12.6px;color:#111;letter-spacing:-0.35px;transform:scaleX(0.985);transform-origin:0 0;">2025-09-15 01:13:54</div>
<div class="a nw " style="left:637px;top:314px;font-size:12.6px;color:#111;letter-spacing:-0.35px;transform:scaleX(0.973);transform-origin:0 0;">0.901</div>
<div class="a nw " style="left:718px;top:314px;font-size:12.6px;color:#111;letter-spacing:-0.35px;transform:scaleX(0.974);transform-origin:0 0;">20050.0</div>
<div class="a nw " style="left:1016px;top:314px;font-size:12.6px;color:#111;letter-spacing:-0.10px;transform:scaleX(0.941);transform-origin:0 0;">0.0</div>
<div class="a nw " style="left:1166px;top:314px;font-size:12.6px;color:#111;letter-spacing:-0.35px;transform:scaleX(0.979);transform-origin:0 0;">2240.62</div>
<div class="a" style="left:1318px;top:305px;width:2px;height:28px;overflow:hidden"><div class="a nw" style="left:0;top:7px;font-size:12.6px;color:#111">8</div></div>
<div class="a" style="left:216px;top:334px;width:1104px;height:28px;background:#fafbfd;border-bottom:1px solid #dde2e4"></div>
<div class="a nw " style="left:228px;top:342px;font-size:12.6px;color:#111;letter-spacing:-0.23px;">11103115</div>
<div class="a nw " style="left:331px;top:342px;font-size:12.6px;color:#111;letter-spacing:-0.35px;transform:scaleX(0.985);transform-origin:0 0;">2025-09-14 00:59:29</div>
<div class="a nw " style="left:484px;top:342px;font-size:12.6px;color:#111;letter-spacing:-0.35px;transform:scaleX(0.985);transform-origin:0 0;">2025-09-14 01:13:17</div>
<div class="a nw " style="left:637px;top:342px;font-size:12.6px;color:#111;letter-spacing:-0.35px;transform:scaleX(0.973);transform-origin:0 0;">0.901</div>
<div class="a nw " style="left:718px;top:342px;font-size:12.6px;color:#111;letter-spacing:-0.35px;transform:scaleX(0.974);transform-origin:0 0;">18631.0</div>
<div class="a nw " style="left:1016px;top:342px;font-size:12.6px;color:#111;letter-spacing:-0.10px;transform:scaleX(0.941);transform-origin:0 0;">0.0</div>
<div class="a nw " style="left:1166px;top:342px;font-size:12.6px;color:#111;letter-spacing:-0.35px;transform:scaleX(0.979);transform-origin:0 0;">2238.95</div>
<div class="a" style="left:1318px;top:333px;width:2px;height:28px;overflow:hidden"><div class="a nw" style="left:0;top:7px;font-size:12.6px;color:#111">8</div></div>
<div class="a" style="left:216px;top:362px;width:1104px;height:28px;background:#fff;border-bottom:1px solid #dde2e4"></div>
<div class="a nw " style="left:228px;top:370px;font-size:12.6px;color:#111;letter-spacing:-0.23px;">11103115</div>
<div class="a nw " style="left:331px;top:370px;font-size:12.6px;color:#111;letter-spacing:-0.35px;transform:scaleX(0.985);transform-origin:0 0;">2025-09-13 01:00:28</div>
<div class="a nw " style="left:484px;top:370px;font-size:12.6px;color:#111;letter-spacing:-0.35px;transform:scaleX(0.985);transform-origin:0 0;">2025-09-13 01:14:03</div>
<div class="a nw " style="left:637px;top:370px;font-size:12.6px;color:#111;letter-spacing:-0.35px;transform:scaleX(0.973);transform-origin:0 0;">0.901</div>
<div class="a nw " style="left:718px;top:370px;font-size:12.6px;color:#111;letter-spacing:-0.35px;transform:scaleX(0.974);transform-origin:0 0;">17282.0</div>
<div class="a nw " style="left:1016px;top:370px;font-size:12.6px;color:#111;letter-spacing:-0.10px;transform:scaleX(0.941);transform-origin:0 0;">0.0</div>
<div class="a nw " style="left:1166px;top:370px;font-size:12.6px;color:#111;letter-spacing:-0.35px;transform:scaleX(0.979);transform-origin:0 0;">2237.74</div>
<div class="a" style="left:1318px;top:361px;width:2px;height:28px;overflow:hidden"><div class="a nw" style="left:0;top:7px;font-size:12.6px;color:#111">8</div></div>
<div class="a" style="left:216px;top:390px;width:1104px;height:28px;background:#fafbfd;border-bottom:1px solid #dde2e4"></div>
<div class="a nw " style="left:228px;top:398px;font-size:12.6px;color:#111;letter-spacing:-0.23px;">11103115</div>
<div class="a nw " style="left:331px;top:398px;font-size:12.6px;color:#111;letter-spacing:-0.35px;transform:scaleX(0.985);transform-origin:0 0;">2025-09-12 01:00:01</div>
<div class="a nw " style="left:484px;top:398px;font-size:12.6px;color:#111;letter-spacing:-0.35px;transform:scaleX(0.985);transform-origin:0 0;">2025-09-12 01:13:42</div>
<div class="a nw " style="left:637px;top:398px;font-size:12.6px;color:#111;letter-spacing:-0.35px;transform:scaleX(0.973);transform-origin:0 0;">0.896</div>
<div class="a nw " style="left:718px;top:398px;font-size:12.6px;color:#111;letter-spacing:-0.35px;transform:scaleX(0.974);transform-origin:0 0;">15843.0</div>
<div class="a nw " style="left:1016px;top:398px;font-size:12.6px;color:#111;letter-spacing:-0.10px;transform:scaleX(0.941);transform-origin:0 0;">0.0</div>
<div class="a nw " style="left:1166px;top:398px;font-size:12.6px;color:#111;letter-spacing:-0.35px;transform:scaleX(0.979);transform-origin:0 0;">2234.82</div>
<div class="a" style="left:1318px;top:389px;width:2px;height:28px;overflow:hidden"><div class="a nw" style="left:0;top:7px;font-size:12.6px;color:#111">8</div></div>
<div class="a" style="left:216px;top:418px;width:1104px;height:28px;background:#fff;border-bottom:1px solid #dde2e4"></div>
<div class="a nw " style="left:228px;top:426px;font-size:12.6px;color:#111;letter-spacing:-0.23px;">11103115</div>
<div class="a nw " style="left:331px;top:426px;font-size:12.6px;color:#111;letter-spacing:-0.35px;transform:scaleX(0.993);transform-origin:0 0;">2025-09-11 00:59:43</div>
<div class="a nw " style="left:484px;top:426px;font-size:12.6px;color:#111;letter-spacing:-0.35px;transform:scaleX(0.993);transform-origin:0 0;">2025-09-11 01:13:32</div>
<div class="a nw " style="left:637px;top:426px;font-size:12.6px;color:#111;letter-spacing:-0.35px;transform:scaleX(0.973);transform-origin:0 0;">0.894</div>
<div class="a nw " style="left:718px;top:426px;font-size:12.6px;color:#111;letter-spacing:-0.35px;transform:scaleX(0.974);transform-origin:0 0;">14407.0</div>
<div class="a nw " style="left:1016px;top:426px;font-size:12.6px;color:#111;letter-spacing:-0.10px;transform:scaleX(0.941);transform-origin:0 0;">0.0</div>
<div class="a nw " style="left:1166px;top:426px;font-size:12.6px;color:#111;letter-spacing:-0.35px;transform:scaleX(0.979);transform-origin:0 0;">2232.73</div>
<div class="a" style="left:1318px;top:417px;width:2px;height:28px;overflow:hidden"><div class="a nw" style="left:0;top:7px;font-size:12.6px;color:#111">8</div></div>
<div class="a" style="left:216px;top:446px;width:1104px;height:28px;background:#fafbfd;border-bottom:1px solid #dde2e4"></div>
<div class="a nw " style="left:228px;top:454px;font-size:12.6px;color:#111;letter-spacing:-0.23px;">11103115</div>
<div class="a nw " style="left:331px;top:454px;font-size:12.6px;color:#111;letter-spacing:-0.35px;transform:scaleX(0.985);transform-origin:0 0;">2025-09-10 00:59:56</div>
<div class="a nw " style="left:484px;top:454px;font-size:12.6px;color:#111;letter-spacing:-0.35px;transform:scaleX(0.985);transform-origin:0 0;">2025-09-10 01:13:30</div>
<div class="a nw " style="left:637px;top:454px;font-size:12.6px;color:#111;letter-spacing:-0.35px;transform:scaleX(0.973);transform-origin:0 0;">0.894</div>
<div class="a nw " style="left:718px;top:454px;font-size:12.6px;color:#111;letter-spacing:-0.35px;transform:scaleX(0.974);transform-origin:0 0;">12967.0</div>
<div class="a nw " style="left:1016px;top:454px;font-size:12.6px;color:#111;letter-spacing:-0.10px;transform:scaleX(0.941);transform-origin:0 0;">0.0</div>
<div class="a nw " style="left:1166px;top:454px;font-size:12.6px;color:#111;letter-spacing:-0.35px;transform:scaleX(0.979);transform-origin:0 0;">2231.15</div>
<div class="a" style="left:1318px;top:445px;width:2px;height:28px;overflow:hidden"><div class="a nw" style="left:0;top:7px;font-size:12.6px;color:#111">8</div></div>
<div class="a" style="left:216px;top:474px;width:1104px;height:28px;background:#fff;border-bottom:1px solid #dde2e4"></div>
<div class="a nw " style="left:228px;top:482px;font-size:12.6px;color:#111;letter-spacing:-0.23px;">11103115</div>
<div class="a nw " style="left:331px;top:482px;font-size:12.6px;color:#111;letter-spacing:-0.35px;transform:scaleX(0.985);transform-origin:0 0;">2025-09-09 01:00:53</div>
<div class="a nw " style="left:484px;top:482px;font-size:12.6px;color:#111;letter-spacing:-0.35px;transform:scaleX(0.985);transform-origin:0 0;">2025-09-09 01:13:48</div>
<div class="a nw " style="left:637px;top:482px;font-size:12.6px;color:#111;letter-spacing:-0.35px;transform:scaleX(0.973);transform-origin:0 0;">0.899</div>
<div class="a nw " style="left:718px;top:482px;font-size:12.6px;color:#111;letter-spacing:-0.35px;">11527.0</div>
<div class="a nw " style="left:1016px;top:482px;font-size:12.6px;color:#111;letter-spacing:-0.10px;transform:scaleX(0.941);transform-origin:0 0;">0.0</div>
<div class="a nw " style="left:1166px;top:482px;font-size:12.6px;color:#111;letter-spacing:-0.35px;transform:scaleX(0.979);transform-origin:0 0;">2229.87</div>
<div class="a" style="left:1318px;top:473px;width:2px;height:28px;overflow:hidden"><div class="a nw" style="left:0;top:7px;font-size:12.6px;color:#111">8</div></div>
<div class="a" style="left:216px;top:502px;width:1104px;height:28px;background:#fafbfd;border-bottom:1px solid #dde2e4"></div>
<div class="a nw " style="left:228px;top:510px;font-size:12.6px;color:#111;letter-spacing:-0.23px;">11103115</div>
<div class="a nw " style="left:331px;top:510px;font-size:12.6px;color:#111;letter-spacing:-0.35px;transform:scaleX(0.985);transform-origin:0 0;">2025-09-08 01:00:19</div>
<div class="a nw " style="left:484px;top:510px;font-size:12.6px;color:#111;letter-spacing:-0.35px;transform:scaleX(0.985);transform-origin:0 0;">2025-09-08 01:13:39</div>
<div class="a nw " style="left:637px;top:510px;font-size:12.6px;color:#111;letter-spacing:-0.35px;transform:scaleX(0.973);transform-origin:0 0;">0.897</div>
<div class="a nw " style="left:718px;top:510px;font-size:12.6px;color:#111;letter-spacing:-0.35px;transform:scaleX(0.974);transform-origin:0 0;">10090.0</div>
<div class="a nw " style="left:1016px;top:510px;font-size:12.6px;color:#111;letter-spacing:-0.10px;transform:scaleX(0.941);transform-origin:0 0;">0.0</div>
<div class="a nw " style="left:1166px;top:510px;font-size:12.6px;color:#111;letter-spacing:-0.35px;transform:scaleX(0.979);transform-origin:0 0;">2227.66</div>
<div class="a" style="left:1318px;top:501px;width:2px;height:28px;overflow:hidden"><div class="a nw" style="left:0;top:7px;font-size:12.6px;color:#111">8</div></div>
<div class="a" style="left:216px;top:530px;width:1104px;height:28px;background:#fff;border-bottom:1px solid #dde2e4"></div>
<div class="a nw " style="left:228px;top:538px;font-size:12.6px;color:#111;letter-spacing:-0.23px;">11103115</div>
<div class="a nw " style="left:331px;top:538px;font-size:12.6px;color:#111;letter-spacing:-0.35px;transform:scaleX(0.985);transform-origin:0 0;">2025-09-07 01:00:13</div>
<div class="a nw " style="left:484px;top:538px;font-size:12.6px;color:#111;letter-spacing:-0.35px;transform:scaleX(0.985);transform-origin:0 0;">2025-09-07 01:13:16</div>
<div class="a nw " style="left:637px;top:538px;font-size:12.6px;color:#111;letter-spacing:-0.35px;transform:scaleX(0.973);transform-origin:0 0;">0.896</div>
<div class="a nw " style="left:718px;top:538px;font-size:12.6px;color:#111;letter-spacing:-0.35px;transform:scaleX(0.979);transform-origin:0 0;">8654.0</div>
<div class="a nw " style="left:1016px;top:538px;font-size:12.6px;color:#111;letter-spacing:-0.10px;transform:scaleX(0.941);transform-origin:0 0;">0.0</div>
<div class="a nw " style="left:1166px;top:538px;font-size:12.6px;color:#111;letter-spacing:-0.35px;transform:scaleX(0.979);transform-origin:0 0;">2225.46</div>
<div class="a" style="left:1318px;top:529px;width:2px;height:28px;overflow:hidden"><div class="a nw" style="left:0;top:7px;font-size:12.6px;color:#111">8</div></div>
<div class="a" style="left:216px;top:558px;width:1104px;height:28px;background:#fafbfd;border-bottom:1px solid #dde2e4"></div>
<div class="a nw " style="left:228px;top:566px;font-size:12.6px;color:#111;letter-spacing:-0.23px;">11103115</div>
<div class="a nw " style="left:331px;top:566px;font-size:12.6px;color:#111;letter-spacing:-0.35px;transform:scaleX(0.985);transform-origin:0 0;">2025-09-06 00:59:28</div>
<div class="a nw " style="left:484px;top:566px;font-size:12.6px;color:#111;letter-spacing:-0.35px;transform:scaleX(0.985);transform-origin:0 0;">2025-09-06 01:13:06</div>
<div class="a nw " style="left:637px;top:566px;font-size:12.6px;color:#111;letter-spacing:-0.35px;transform:scaleX(0.973);transform-origin:0 0;">0.891</div>
<div class="a nw " style="left:718px;top:566px;font-size:12.6px;color:#111;letter-spacing:-0.35px;transform:scaleX(0.979);transform-origin:0 0;">7214.0</div>
<div class="a nw " style="left:1016px;top:566px;font-size:12.6px;color:#111;letter-spacing:-0.10px;transform:scaleX(0.941);transform-origin:0 0;">0.0</div>
<div class="a nw " style="left:1166px;top:566px;font-size:12.6px;color:#111;letter-spacing:-0.35px;transform:scaleX(0.979);transform-origin:0 0;">2222.76</div>
<div class="a" style="left:1318px;top:557px;width:2px;height:28px;overflow:hidden"><div class="a nw" style="left:0;top:7px;font-size:12.6px;color:#111">8</div></div>
<div class="a" style="left:216px;top:586px;width:1104px;height:28px;background:#fff;border-bottom:1px solid #dde2e4"></div>
<div class="a nw " style="left:228px;top:594px;font-size:12.6px;color:#111;letter-spacing:-0.23px;">11103115</div>
<div class="a nw " style="left:331px;top:594px;font-size:12.6px;color:#111;letter-spacing:-0.35px;transform:scaleX(0.985);transform-origin:0 0;">2025-09-05 00:59:48</div>
<div class="a nw " style="left:484px;top:594px;font-size:12.6px;color:#111;letter-spacing:-0.35px;transform:scaleX(0.985);transform-origin:0 0;">2025-09-05 01:13:02</div>
<div class="a nw " style="left:637px;top:594px;font-size:12.6px;color:#111;letter-spacing:-0.35px;transform:scaleX(0.973);transform-origin:0 0;">0.891</div>
<div class="a nw " style="left:718px;top:594px;font-size:12.6px;color:#111;letter-spacing:-0.35px;transform:scaleX(0.979);transform-origin:0 0;">5785.0</div>
<div class="a nw " style="left:1016px;top:594px;font-size:12.6px;color:#111;letter-spacing:-0.10px;transform:scaleX(0.941);transform-origin:0 0;">0.0</div>
<div class="a nw " style="left:1166px;top:594px;font-size:12.6px;color:#111;letter-spacing:-0.35px;transform:scaleX(0.979);transform-origin:0 0;">2220.45</div>
<div class="a" style="left:1318px;top:585px;width:2px;height:28px;overflow:hidden"><div class="a nw" style="left:0;top:7px;font-size:12.6px;color:#111">8</div></div>
<div class="a" style="left:1320px;top:250px;width:15px;height:368px;background:#f8f8f8"></div>
<svg class="a" style="left:1322px;top:255px" width="11" height="7" viewBox="0 0 11 7"><path d="M0.8 6.2H10.2L5.5 1Z" fill="#8a8a8a"/></svg>
<div class="a" style="left:1323px;top:268px;width:9px;height:291px;border-radius:5px;background:#8a8a8a"></div>
<svg class="a" style="left:1322px;top:604px" width="11" height="7" viewBox="0 0 11 7"><path d="M0.8 0.8H10.2L5.5 6Z" fill="#8a8a8a"/></svg>
<div class="a" style="left:216px;top:614px;width:1104px;height:19px;background:#fafafa"></div>
<svg class="a" style="left:219px;top:620px" width="7" height="11" viewBox="0 0 7 11"><path d="M6.2 0.8V10.2L1 5.5Z" fill="#8a8a8a"/></svg>
<div class="a" style="left:234px;top:621px;width:224px;height:9px;border-radius:5px;background:#8a8a8a"></div>
<svg class="a" style="left:1308px;top:620px" width="7" height="11" viewBox="0 0 7 11"><path d="M0.8 0.8V10.2L6 5.5Z" fill="#8a8a8a"/></svg>
<div class="a" style="left:216px;top:633px;width:1119px;height:1px;background:#bdc3c7"></div>
<div class="a nw " style="left:1069px;top:643px;font-size:12.8px;color:#6b6b6b;letter-spacing:-0.31px;">1 to 15 of 27</div>
<div class="a nw " style="left:1212px;top:643px;font-size:12.8px;color:#6b6b6b;letter-spacing:-0.35px;transform:scaleX(0.968);transform-origin:0 0;">Page 1 of 2</div>
<svg class="a" style="left:1166px;top:644px" width="11" height="12" viewBox="0 0 11 12"><path d="M1 1V11" stroke="#8c8c8c" stroke-width="1.3"/><path d="M9.5 1.5L5 6L9.5 10.5" fill="none" stroke="#8c8c8c" stroke-width="1.3"/></svg>
<svg class="a" style="left:1192px;top:644px" width="7" height="12" viewBox="0 0 7 12"><path d="M6 1.5L1.5 6L6 10.5" fill="none" stroke="#8c8c8c" stroke-width="1.3"/></svg>
<svg class="a" style="left:1283px;top:644px" width="7" height="12" viewBox="0 0 7 12"><path d="M1 1.5L5.5 6L1 10.5" fill="none" stroke="#8c8c8c" stroke-width="1.3"/></svg>
<svg class="a" style="left:1305px;top:644px" width="11" height="12" viewBox="0 0 11 12"><path d="M1.5 1.5L6 6L1.5 10.5" fill="none" stroke="#8c8c8c" stroke-width="1.3"/><path d="M10 1V11" stroke="#8c8c8c" stroke-width="1.3"/></svg>
<div class="a" style="left:0;top:728px;width:1366px;height:40px;background:linear-gradient(90deg,#272b2f 0px,#2a2b2c 48px,#332d27 340px,#372e26 600px,#372e26 900px,#2f2a25 1000px,#25232a 1120px,#1f2128 1250px,#1e2028 1366px)"></div>
<svg class="a" style="left:15px;top:739px" width="18" height="18" viewBox="0 0 18 18"><path d="M0.6 2.3L6.8 1.5V7.9H0.6Z M7.7 1.4L17.3 0.6V7.9H7.7Z M0.6 8.8H6.8V16.3L0.6 15.6Z M7.7 8.8H17.3V17.2L7.7 16.4Z" fill="#fff"/></svg>
<div class="a" style="left:48px;top:728px;width:288px;height:40px;background:#f0f0f0;border-top:1px solid #c4c4c4;border-bottom:1px solid #c8c8c8"></div>
<svg class="a" style="left:59px;top:739px" width="18" height="18" viewBox="0 0 18 18"><circle cx="11" cy="6.8" r="5.6" fill="none" stroke="#111" stroke-width="1.4"/><path d="M7 10.8L0.8 17" stroke="#111" stroke-width="1.6"/></svg>
<div class="a nw " style="left:89px;top:740px;font-size:15px;color:#1a1a1a;letter-spacing:-0.28px;">Type here to search</div>
<svg class="a" style="left:258px;top:729px" width="76" height="38" viewBox="0 0 76 38">
 <defs><linearGradient id="mg" x1="0" y1="0" x2="1" y2="0.8"><stop offset="0" stop-color="#4a647c"/><stop offset="0.45" stop-color="#7f98ad"/><stop offset="1" stop-color="#b8c8d5"/></linearGradient></defs>
 <path d="M12.3 3.2C9.5 8 10 16 14 22C16 28 20 34 25 35.6C30 35 34 32 41 32C50 30 57 26 60 19C61 15 60 12 58 12.5C52 16 45 17 40 16C48 12 58 7 69 1.6C58 4 46 10 33 11.5C27 12 22 12.5 20.5 13.1C17 10 14 6 12.3 3.2Z" fill="url(#mg)"/>
 <path d="M58 12.5C60 18 56 26 43 31.5C53 30 62 23 58 12.5Z" fill="#eef2f5"/>
 <circle cx="17.8" cy="25.7" r="2.6" fill="#dfe6ec"/><circle cx="18" cy="26" r="1.7" fill="#1b2640"/>
 <circle cx="32" cy="30.7" r="2.6" fill="#dfe6ec"/><circle cx="32.2" cy="31" r="1.7" fill="#1b2640"/>
 <circle cx="7.9" cy="25.7" r="3" fill="#a6e3f3"/><circle cx="4.1" cy="18.6" r="2" fill="#a6e3f3"/>
 <circle cx="70" cy="18" r="3" fill="#a6e3f3"/><circle cx="64" cy="24.6" r="2" fill="#a6e3f3"/>
</svg>
<svg class="a" style="left:350px;top:739px" width="19" height="17" viewBox="0 0 19 17"><path d="M2 1.5H12.6M2 15.2H12.6M2.5 1.5V4M12.3 1.5V4M2.5 12.8V15.2M12.3 12.8V15.2M16.4 1.5V15.7" fill="none" stroke="#fff" stroke-width="1.1"/><rect x="2.7" y="5.3" width="9.3" height="6.6" fill="none" stroke="#fff" stroke-width="1.1"/><rect x="15.2" y="5.2" width="2.4" height="2.4" fill="#fff"/></svg>
<svg class="a" style="left:399px;top:737px" width="24" height="22" viewBox="0 0 24 22">
 <defs><linearGradient id="cp1" x1="0" y1="0" x2="0" y2="1"><stop offset="0" stop-color="#18a6f2"/><stop offset="0.55" stop-color="#4cb86a"/><stop offset="1" stop-color="#f8c400"/></linearGradient>
 <linearGradient id="cp2" x1="0" y1="0" x2="0" y2="1"><stop offset="0" stop-color="#a85cf0"/><stop offset="0.5" stop-color="#ee5aa0"/><stop offset="1" stop-color="#ff9a50"/></linearGradient></defs>
 <path d="M12 1H15.5C17 1 18 2 18.5 3.5L19.5 6.8H13.5Z" fill="#1d5fd6"/>
 <path d="M5.5 14.5H11L12.8 21H9C7.5 21 6.8 20 6.3 18.5Z" fill="#f0582a"/>
 <path d="M6.5 1H13.8L9 15.2H2.5C1.2 15.2 0.6 14 1 12.5L4 3C4.5 1.8 5.3 1 6.5 1Z" fill="url(#cp1)"/>
 <path d="M14.2 6.5H21.5C22.8 6.5 23.4 7.8 23 9L20 19C19.6 20.3 18.7 21 17.5 21H10.9Z" fill="url(#cp2)"/>
</svg>
<svg class="a" style="left:447px;top:735px" width="26" height="26" viewBox="0 0 26 26">
 <defs><linearGradient id="ed" x1="0" y1="0.2" x2="1" y2="0.6"><stop offset="0" stop-color="#2a9ff0"/><stop offset="0.45" stop-color="#2cc0d8"/><stop offset="1" stop-color="#6ae25a"/></linearGradient></defs>
 <circle cx="13" cy="13" r="12" fill="#1a7fe0"/>
 <path d="M1.2 10.5C2.5 5 7.2 1 13 1C19.6 1 25 6 25 12.2C25 15 23.5 16.5 21 16.5H15.8C14.6 16.5 14 15.8 14.6 15C15.6 13.8 15.3 11.5 13 10.5C10 9 4 8.5 1.2 10.5Z" fill="url(#ed)"/>
 <path d="M8.2 13C7.6 18 10.2 23 15 24.2C19 25 22.3 22.5 23.6 18.6C21 19.8 17 19.8 14.2 18C11.8 16.5 10.8 14.5 11 12.5Z" fill="#0f5cb8"/>
 <ellipse cx="12.8" cy="13.9" rx="2.3" ry="2.6" fill="#38302a"/>
 <path d="M15 16.2C17.5 17.5 21 17.8 23.8 17.2" fill="none" stroke="#38302a" stroke-width="1.1"/>
</svg>
<svg class="a" style="left:497px;top:738px" width="23" height="19" viewBox="0 0 23 19"><path d="M0.5 1.5A1 1 0 0 1 1.5 0.5H8L10 2.5H21.5A1 1 0 0 1 22.5 3.5V17.5A1 1 0 0 1 21.5 18.5H1.5A1 1 0 0 1 0.5 17.5Z" fill="#f8cf62"/><path d="M0.5 1.5A1 1 0 0 1 1.5 0.5H8L10 2.5H22.5V4H0.5Z" fill="#e0a82e"/><path d="M5 18.5V11A1.5 1.5 0 0 1 6.5 9.5H16.5A1.5 1.5 0 0 1 18 11V18.5H14.5V13H8.5V18.5Z" fill="#3b97e0"/></svg>
<svg class="a" style="left:545px;top:737px" width="25" height="24" viewBox="0 0 25 24"><path d="M7.5 6V3A2 2 0 0 1 9.5 1H15.5A2 2 0 0 1 17.5 3V6" fill="none" stroke="#27a4e8" stroke-width="2"/><rect x="0.5" y="5" width="24" height="18.5" rx="3" fill="#f4f4f4"/><rect x="7.5" y="10" width="4.5" height="4.5" fill="#f25022"/><rect x="13" y="10" width="4.5" height="4.5" fill="#7fba00"/><rect x="7.5" y="15.5" width="4.5" height="4.5" fill="#00a4ef"/><rect x="13" y="15.5" width="4.5" height="4.5" fill="#ffb900"/></svg>
<svg class="a" style="left:595px;top:737px" width="25" height="23" viewBox="0 0 25 23"><path d="M8 5L15 0.5L24 5.5V20A2 2 0 0 1 22 22H4A2 2 0 0 1 2 20V9Z" fill="#28a8ea"/><path d="M14 6L24 5.5V12L14 17Z" fill="#0a5cb8"/><path d="M2 11L14 17L24 12V20A2 2 0 0 1 22 22H4A2 2 0 0 1 2 20Z" fill="#50d9ff"/><rect x="0" y="4.5" width="14" height="14" rx="1" fill="#1273d6"/><ellipse cx="7" cy="11.5" rx="3.6" ry="4.2" fill="none" stroke="#fff" stroke-width="1.9"/></svg>
<div class="a" style="left:632px;top:728px;width:48px;height:40px;background:#5c564f"></div>
<div class="a" style="left:632px;top:765px;width:48px;height:3px;background:#7cc0f0"></div>
<svg class="a" style="left:643px;top:735px" width="28" height="28" viewBox="0 0 28 28">
 <path d="M12.5 13L22.89 7A12 12 0 0 0 2.11 7Z" fill="#e33b2e"/>
 <path d="M12.5 13L12.5 25A12 12 0 0 0 22.89 7Z" fill="#f6c02c"/>
 <path d="M12.5 13L2.11 7A12 12 0 0 0 12.5 25Z" fill="#2ea44f"/>
 <circle cx="12.5" cy="13" r="5.6" fill="#fff"/><circle cx="12.5" cy="13" r="4.4" fill="#3b78e7"/>
 <circle cx="19" cy="19.2" r="7.6" fill="#1b8ad6"/>
 <text x="19" y="23.2" font-family="Liberation Sans" font-size="10.5" fill="#fff" text-anchor="middle">R</text>
</svg>
<svg class="a" style="left:693px;top:739px" width="24" height="18" viewBox="0 0 24 18"><rect x="0" y="0.5" width="24" height="17" rx="4.5" fill="#ff0000"/><path d="M9.5 5L16.5 9L9.5 13Z" fill="#fff"/></svg>
<svg class="a" style="left:932px;top:740px" width="22" height="15" viewBox="0 0 22 15"><defs><linearGradient id="cl" x1="0" y1="0" x2="0" y2="1"><stop offset="0" stop-color="#b7d6fa"/><stop offset="1" stop-color="#6ea6ea"/></linearGradient></defs><path d="M5 14.5A4.3 4.3 0 0 1 4.2 6A6.5 6.5 0 0 1 16.5 5.5A4.5 4.5 0 0 1 17.5 14.5Z" fill="url(#cl)"/></svg>
<div class="a nw " style="left:963px;top:740px;font-size:14.2px;color:#fff;letter-spacing:-0.20px;white-space:pre;">22°C  Cloudy</div>
<svg class="a" style="left:1068px;top:743px" width="14" height="8" viewBox="0 0 14 8"><path d="M1 7L7 1L13 7" fill="none" stroke="#fff" stroke-width="1.3"/></svg>
<svg class="a" style="left:1093px;top:740px" width="13" height="16" viewBox="0 0 13 16"><path d="M2 3A6 2 0 0 1 9 3M2 13A6 2 0 0 0 9 13" fill="none" stroke="#fff" stroke-width="1"/><rect x="1" y="5" width="8" height="6" rx="1" fill="none" stroke="#fff" stroke-width="1.1"/><path d="M9 7L12 5.5V10.5L9 9" fill="none" stroke="#fff" stroke-width="1"/></svg>
<svg class="a" style="left:1114px;top:741px" width="18" height="15" viewBox="0 0 18 15"><path d="M3.5 11A3 3 0 0 1 3 5A4.5 4.5 0 0 1 11.5 4A3.5 3.5 0 0 1 13 11Z" fill="#c8c8c8"/><circle cx="12.5" cy="10.5" r="4" fill="#e81123"/><path d="M10.7 8.7L14.3 12.3M14.3 8.7L10.7 12.3" stroke="#fff" stroke-width="1.1"/></svg>
<svg class="a" style="left:1139px;top:740px" width="17" height="16" viewBox="0 0 17 16"><path d="M1 3L14 1V12L1 13Z" fill="none" stroke="#fff" stroke-width="1.1"/><path d="M5 7A3 3 0 0 1 10 5M10 7A3 3 0 0 1 5 9" fill="none" stroke="#fff" stroke-width="1"/><circle cx="13" cy="12.5" r="3" fill="#f7a21b"/></svg>
<svg class="a" style="left:1162px;top:740px" width="18" height="16" viewBox="0 0 18 16"><rect x="5" y="2.5" width="12" height="8" fill="none" stroke="#fff" stroke-width="1.1"/><path d="M11 10.5V13.5M8 14H14" stroke="#fff" stroke-width="1.1"/><rect x="1" y="1" width="4" height="4" fill="none" stroke="#fff" stroke-width="1"/><path d="M3 5V14" stroke="#fff" stroke-width="1"/></svg>
<svg class="a" style="left:1186px;top:740px" width="18" height="16" viewBox="0 0 18 16"><path d="M1 5.5H4L8 2V14L4 10.5H1Z" fill="none" stroke="#fff" stroke-width="1.1"/><path d="M10.5 6A3 3 0 0 1 10.5 10M12.5 4A6 6 0 0 1 12.5 12M14.5 2A8.5 8.5 0 0 1 14.5 14" fill="none" stroke="#fff" stroke-width="1.1"/></svg>
<div class="a nw " style="left:1213px;top:741px;font-size:11.6px;color:#fff;letter-spacing:-0.10px;transform:scaleX(0.947);transform-origin:0 0;">ENG</div>
<div class="a nw " style="left:1254px;top:732px;font-size:12px;color:#fff;letter-spacing:-0.35px;transform:scaleX(0.985);transform-origin:0 0;">03:36 PM</div>
<div class="a nw " style="left:1249px;top:750px;font-size:12px;color:#fff;letter-spacing:-0.34px;">17-09-2025</div>
<svg class="a" style="left:1324px;top:739px" width="26" height="26" viewBox="0 0 26 26"><path d="M1 1.5H17V13H8L4 17V13H1Z" fill="#fff"/><path d="M3.5 4.5H14.5M3.5 7H14.5M3.5 9.5H11" stroke="#1f2026" stroke-width="1"/><circle cx="15.5" cy="15.5" r="7.5" fill="#1f2026" stroke="#777" stroke-width="1"/><text x="15.5" y="19.5" font-family="Liberation Sans" font-size="11" fill="#fff" text-anchor="middle">3</text></svg>
<div class="a" style="left:1361px;top:728px;width:1px;height:40px;background:#6a6a6a"></div>
</body></html>
